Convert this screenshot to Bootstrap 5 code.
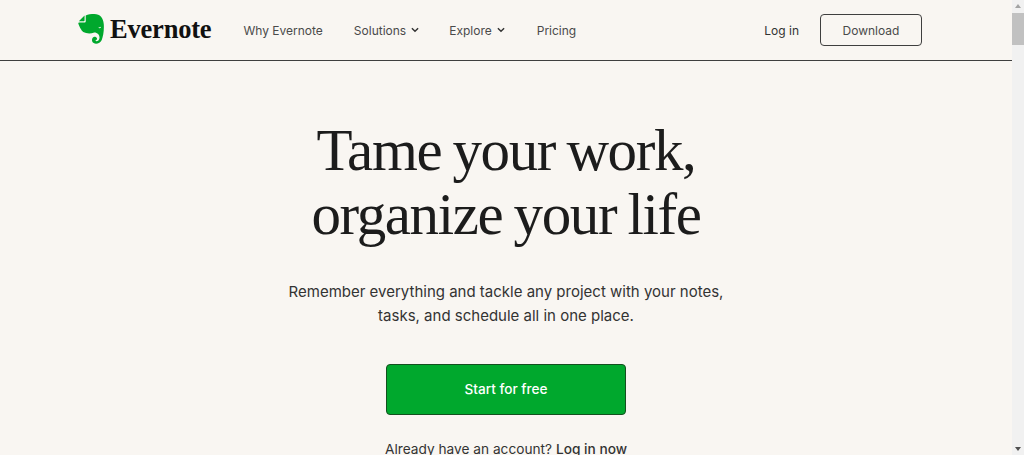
<!DOCTYPE html>
<html lang="en">
<head>
<meta charset="utf-8">
<title>Evernote</title>
<link href="https://cdn.jsdelivr.net/npm/bootstrap@5.3.0/dist/css/bootstrap.min.css" rel="stylesheet">
<style>
html,body{height:100%;overflow:hidden}
body{background:#f9f6f2;font-family:"Inter",sans-serif;color:#1f1f1f}
.pagewrap{width:1012px}
.topbar{height:61px;border-bottom:1px solid #3f3f3f;padding:0 90px 0 78px}
.brandname{font-family:"Liberation Serif",serif;font-weight:700;font-size:26.500px;color:#111;letter-spacing:-.2px;margin-left:5px;line-height:1}
.brandlink{margin-right:32px;margin-top:-2px}
.navitem{font-size:12px;color:#4a4a4a;text-decoration:none;white-space:nowrap;padding-top:1px}
.navgroup{gap:31px}
.navchev{margin-left:5px;margin-top:-2px}
.navsol{margin-right:-1px}
.navexp{margin-right:1px}
.loginlink{font-size:12px;color:#333;text-decoration:none;margin-right:21px;padding-top:1px}
.dlbtn{width:102px;height:32px;padding:0;font-size:12px;line-height:31px;color:#4a4a4a;border:1px solid #3f3f3f;border-radius:4px;--bs-btn-hover-bg:transparent}
.hero{padding-top:57px}
.herotitle{font-family:"Liberation Serif",serif;font-weight:400;font-size:59px;line-height:64px;letter-spacing:-1.400px;word-spacing:-2px;color:#1c1c1c;margin:0 0 34px}
.herotext{font-size:15px;line-height:24px;color:#333;margin:0 0 36px}
.startbtn{width:240px;height:51px;padding:0;background:#00a82d;color:#fff;font-size:13.600px;font-weight:500;line-height:49px;border:1px solid #14501f;border-radius:4px}
.already{font-size:13.700px;line-height:20px;margin:24px 0 0;color:#333}
.already a{color:#333;text-decoration:none;font-weight:500}
.sbar{position:fixed;top:0;right:0;bottom:0;width:12px;background:#f1f1f1}
.sthumb{position:absolute;top:13px;left:0;width:12px;height:32px;background:#c1c1c1}
.sarrow{position:absolute;left:3px;width:0;height:0;border-left:3px solid transparent;border-right:3px solid transparent}
.sup{top:4px;border-bottom:4px solid #a3a3a3}
.sdown{bottom:4px;border-top:4px solid #505050}
</style>
</head>
<body>
<div class="pagewrap">
<nav class="topbar d-flex align-items-center">
<a href="#" class="brandlink d-flex align-items-center text-decoration-none">
<svg width="27" height="30" viewBox="0 0 26.500 30" aria-hidden="true"><path fill="#00a82d" d="M7.500 1.500C9.500 0 13 0 16 0c6 0 9 4 9.500 10 .5 6-.5 12-2 16-1.500 4-8 5-9.500 1.500-1-3 1-5.500 3.500-4.500 2 1 1.500 3.500-.3 3.300.2 1.500 3 1.200 3.800-1.300 1-3-1-6.500-5-6.500-4 1.500-8 1-11-.5C3 16.500 1 12 0 9.500l.5-1h5.500c1 0 1.500-.5 1.500-1.500z"/><path fill="#00a82d" d="M6.300 1.500V6.200c0 .6-.4 1-1 1H.6z"/><path d="M20.500 13.500c.8.400 1.500.300 2-.2" fill="none" stroke="#f9f6f2" stroke-width="1"/></svg>
<span class="brandname">Evernote</span>
</a>
<div class="navgroup d-flex align-items-center">
<a class="navitem" href="#">Why Evernote</a>
<a class="navitem navsol d-flex align-items-center" href="#">Solutions<svg class="navchev" width="8" height="6" viewBox="0 0 9 6"><path d="M1 1l3.500 3.500L8 1" fill="none" stroke="#333" stroke-width="1.600"/></svg></a>
<a class="navitem navexp d-flex align-items-center" href="#">Explore<svg class="navchev" width="8" height="6" viewBox="0 0 9 6"><path d="M1 1l3.500 3.500L8 1" fill="none" stroke="#333" stroke-width="1.600"/></svg></a>
<a class="navitem" href="#">Pricing</a>
</div>
<div class="ms-auto d-flex align-items-center">
<a class="loginlink" href="#">Log in</a>
<a class="btn dlbtn" href="#">Download</a>
</div>
</nav>
<main class="hero text-center">
<h1 class="herotitle">Tame your work,<br>organize your life</h1>
<p class="herotext">Remember everything and tackle any project with your notes,<br>tasks, and schedule all in one place.</p>
<a class="btn startbtn" href="#">Start for free</a>
<p class="already">Already have an account? <a href="#">Log in now</a></p>
</main>
</div>
<div class="sbar" aria-hidden="true"><div class="sarrow sup"></div><div class="sthumb"></div><div class="sarrow sdown"></div></div>
<script src="https://cdn.jsdelivr.net/npm/bootstrap@5.3.0/dist/js/bootstrap.bundle.min.js"></script>
</body>
</html>
